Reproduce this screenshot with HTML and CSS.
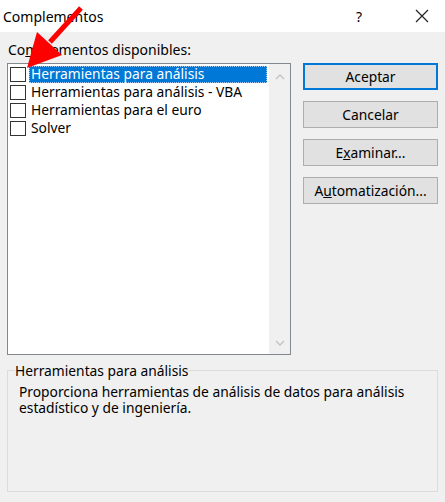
FILE: index.html
```html
<!DOCTYPE html>
<html lang="es">
<head>
<meta charset="utf-8">
<title>Complementos</title>
<link rel="stylesheet" href="styles.css">
</head>
<body>
<div class="dialog">
  <div class="titlebar">
    <span class="title">Complementos</span>
    <span class="help">?</span>
    <span class="close">
      <svg width="14" height="14" viewBox="0 0 14 14"><path d="M1 1 L13 13 M13 1 L1 13" stroke="#222" stroke-width="1.2" fill="none"/></svg>
    </span>
  </div>
  <div class="body">
    <div class="top">
      <div class="left">
        <div class="label">Co<u>m</u>plementos disponibles:</div>
        <div class="listbox">
          <div class="items">
            <div class="item selected"><span class="check"></span><span class="text">Herramientas para análisis</span></div>
            <div class="item"><span class="check"></span><span class="text">Herramientas para análisis - VBA</span></div>
            <div class="item"><span class="check"></span><span class="text">Herramientas para el euro</span></div>
            <div class="item"><span class="check"></span><span class="text">Solver</span></div>
          </div>
          <div class="scrollbar">
            <svg width="10" height="6" viewBox="0 0 10 6"><path d="M1 5 L5 1 L9 5" stroke="#c2c2c2" stroke-width="1.3" fill="none"/></svg>
            <svg width="10" height="6" viewBox="0 0 10 6"><path d="M1 1 L5 5 L9 1" stroke="#c2c2c2" stroke-width="1.3" fill="none"/></svg>
          </div>
        </div>
      </div>
      <div class="buttons">
        <div class="btn default">Aceptar</div>
        <div class="btn">Cancelar</div>
        <div class="btn">E<u>x</u>aminar...</div>
        <div class="btn">A<u>u</u>tomatización...</div>
      </div>
    </div>
    <fieldset class="group">
      <legend>Herramientas para análisis</legend>
      <p class="desc">Proporciona herramientas de análisis de datos para análisis estadístico y de ingeniería.</p>
    </fieldset>
  </div>
  <svg class="arrow" width="90" height="75" viewBox="0 0 90 75">
    <path d="M81 8 L50 42" stroke="#ff0000" stroke-width="5" stroke-linecap="butt" fill="none"/>
    <polygon points="27,68 37,32 62,55" fill="#ff0000"/>
  </svg>
</div>
</body>
</html>
```
FILE: styles.css
```css
* { box-sizing: border-box; }
html, body { margin: 0; padding: 0; }
body {
  width: 445px;
  height: 502px;
  font-family: "Noto Sans", "Open Sans", sans-serif;
  font-size: 13.8px;
  color: #000;
  background: #f0f0f0;
  overflow: hidden;
}
.dialog { position: relative; width: 445px; height: 502px; }
.titlebar {
  height: 32px;
  background: #fff;
  display: flex;
  align-items: center;
  padding-left: 3px;
}
.title { font-size: 14px; flex: 1; color: #000; }
.help { width: 14px; text-align: center; margin-right: 49px; font-size: 14px; }
.close { display: flex; margin-right: 16px; }
.body { padding: 8px 7px 0 7px; }
.top { display: flex; gap: 12px; }
.left { width: 284px; }
.label { height: 23px; padding-left: 1px; line-height: 20px; font-size: 14px; }
.listbox {
  height: 292px;
  border: 1px solid #828790;
  background: #fff;
  display: flex;
}
.items { flex: 1; padding: 1px 0 0 2px; }
.item { height: 18px; display: flex; align-items: center; }
.check {
  width: 16px; height: 15px;
  border: 1px solid #333;
  background: #fff;
  flex: none;
  margin-right: 3px;
}
.item .text { height: 17px; line-height: 16px; padding: 0 2px; flex: none; }
.item.selected .text {
  background: #0078d7;
  color: #fff;
  outline: 1px dotted #9fc7ee;
  outline-offset: -1px;
  width: 238px;
}
.scrollbar {
  width: 21px;
  background: #f0f0f0;
  display: flex;
  flex-direction: column;
  justify-content: space-between;
  align-items: center;
  padding: 10px 0 8px;
}
.buttons { width: 135px; display: flex; flex-direction: column; gap: 11px; padding-top: 23px; }
.btn {
  height: 27px;
  border: 1px solid #adadad;
  background: #e1e1e1;
  display: flex; align-items: center; justify-content: center;
}
.btn.default { border: 2px solid #0078d7; }
.group {
  margin: 6px 0 0 0;
  border: 1px solid #dcdcdc;
  padding: 0 10px;
  height: 131px;
  width: 431px;
}
.group legend { padding: 0; margin-left: -3px; }
.desc { margin: 4px 0 0 1px; line-height: 16px; }
.arrow { position: absolute; left: 0; top: 0; }
```
